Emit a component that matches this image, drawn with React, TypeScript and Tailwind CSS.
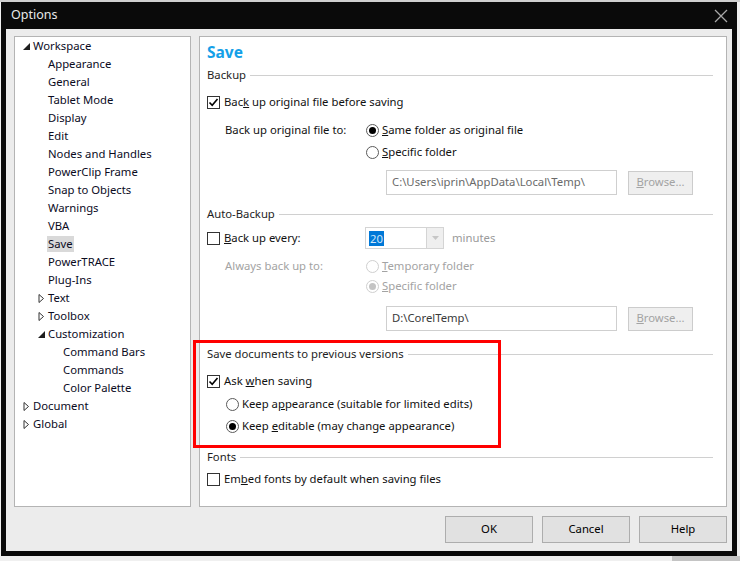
import React from "react";

const font = { fontFamily: '"Segoe UI", "Noto Sans", sans-serif' };

function Check({ checked, disabled }: { checked?: boolean; disabled?: boolean }) {
  return (
    <span
      className={`inline-flex w-[13px] h-[13px] shrink-0 items-center justify-center border bg-white ${
        disabled ? "border-[#c8c8c8]" : "border-[#333333]"
      }`}
    >
      {checked && (
        <svg width="11" height="11" viewBox="0 0 11 11">
          <path d="M1.5 5.5 L4.2 8.3 L9.5 2" fill="none" stroke="#000" strokeWidth="1.6" />
        </svg>
      )}
    </span>
  );
}

function Radio({ checked, disabled }: { checked?: boolean; disabled?: boolean }) {
  return (
    <span
      className={`inline-flex w-[13px] h-[13px] shrink-0 items-center justify-center rounded-full border bg-white ${
        disabled ? "border-[#cfcfcf]" : "border-[#5a5a5a]"
      }`}
    >
      {checked && (
        <span className={`w-[7px] h-[7px] rounded-full ${disabled ? "bg-[#c4c4c4]" : "bg-black"}`} />
      )}
    </span>
  );
}

function Heading({ text }: { text: string }) {
  return (
    <div className="flex items-center h-[20px] gap-[4px] text-[#1e1e1e]">
      <span className="whitespace-nowrap">{text}</span>
      <div className="flex-1 h-px bg-[#d0d0d0]" />
    </div>
  );
}

function Browse() {
  return (
    <div className="w-[65px] h-[24px] border border-[#cccccc] bg-[#efefef] text-[#a3a3a3] flex items-center justify-center">
      <span>
        <u>B</u>rowse...
      </span>
    </div>
  );
}

function TriClosed() {
  return (
    <svg width="7" height="9" viewBox="0 0 7 9" className="shrink-0">
      <path d="M1 0.5 L5.5 4.5 L1 8.5 Z" fill="#fff" stroke="#333" strokeWidth="1" />
    </svg>
  );
}
function TriOpen() {
  return (
    <svg width="7" height="7" viewBox="0 0 7 7" className="shrink-0">
      <path d="M7 0 L7 7 L0 7 Z" fill="#1e1e1e" />
    </svg>
  );
}

type Item = { label: string; level: number; tri?: "open" | "closed"; selected?: boolean };
const items: Item[] = [
  { label: "Workspace", level: 0, tri: "open" },
  { label: "Appearance", level: 1 },
  { label: "General", level: 1 },
  { label: "Tablet Mode", level: 1 },
  { label: "Display", level: 1 },
  { label: "Edit", level: 1 },
  { label: "Nodes and Handles", level: 1 },
  { label: "PowerClip Frame", level: 1 },
  { label: "Snap to Objects", level: 1 },
  { label: "Warnings", level: 1 },
  { label: "VBA", level: 1 },
  { label: "Save", level: 1, selected: true },
  { label: "PowerTRACE", level: 1 },
  { label: "Plug-Ins", level: 1 },
  { label: "Text", level: 1, tri: "closed" },
  { label: "Toolbox", level: 1, tri: "closed" },
  { label: "Customization", level: 1, tri: "open" },
  { label: "Command Bars", level: 2 },
  { label: "Commands", level: 2 },
  { label: "Color Palette", level: 2 },
  { label: "Document", level: 0, tri: "closed" },
  { label: "Global", level: 0, tri: "closed" },
];

export default function App() {
  return (
    <div className="relative w-[740px] h-[561px] bg-[#f0f0f0] overflow-hidden text-[11.3px]" style={font}>
      <div className="absolute left-0 top-0 w-[740px] h-[2px] bg-[#cfcfcf]" />
      <div className="absolute left-[672px] top-[556px] w-[68px] h-[5px] bg-[#c4c4c4]" />
      {/* window */}
      <div className="absolute left-[1px] top-[2px] w-[736px] h-[554px] bg-[#0a0a0a] flex flex-col px-[5px] pb-[5px]">
        <div className="h-[27px] flex items-center justify-between pl-[5px] pr-[4px] text-[#e8e8e8] text-[12.5px]">
          <span>Options</span>
          <svg width="14" height="14" viewBox="0 0 14 14">
            <path d="M1 1 L13 13 M13 1 L1 13" stroke="#a8a8a8" strokeWidth="1.3" />
          </svg>
        </div>
        <div className="flex-1 bg-[#ececec] flex flex-col pl-[8px] pr-[5px] pt-[7px]">
          <div className="flex gap-[8px] h-[471px]">
            {/* tree */}
            <div className="w-[177px] h-full bg-white border border-[#b4b4b4] text-[#0b0b1e]">
              {items.map((it) => (
                <div
                  key={it.label}
                  className="h-[18px] flex items-center"
                  style={{ paddingLeft: it.level === 0 ? 8 : it.level === 1 ? (it.tri ? 23 : 33) : 48 }}
                >
                  {it.tri && (
                    <span className="w-[10px] flex items-center">
                      {it.tri === "open" ? <TriOpen /> : <TriClosed />}
                    </span>
                  )}
                  <span className={`leading-[16px] ${it.selected ? "bg-[#d9d9d9] px-[1px] -ml-[1px]" : ""}`}>
                    {it.label}
                  </span>
                </div>
              ))}
            </div>
            {/* right panel */}
            <div className="relative flex-1 h-full bg-white border border-[#b4b4b4] pl-[7px] pr-[13px] pt-[6px] text-[#111]">
              <div className="h-[20px] flex items-center text-[15.5px] font-bold text-[#14a0e8]">Save</div>
              <div className="mt-[2px]">
                <Heading text="Backup" />
              </div>
              <div className="mt-[7px] h-[20px] flex items-center gap-[4px]">
                <Check checked />
                <span>
                  Bac<u>k</u> up original file before saving
                </span>
              </div>
              <div className="mt-[8px] ml-[18px] flex">
                <div className="w-[141px] h-[20px] flex items-center">Back up original file to:</div>
                <div className="flex flex-col">
                  <div className="h-[20px] flex items-center gap-[3px]">
                    <Radio checked />
                    <span>
                      <u>S</u>ame folder as original file
                    </span>
                  </div>
                  <div className="h-[20px] mt-[2px] flex items-center gap-[3px]">
                    <Radio />
                    <span>
                      <u>S</u>pecific folder
                    </span>
                  </div>
                </div>
              </div>
              <div className="mt-[8px] ml-[179px] flex items-center gap-[11px]">
                <div className="w-[231px] h-[25px] border border-[#cfcfcf] flex items-center pl-[5px] text-[#6a6a6a]">
                  C:\Users\iprin\AppData\Local\Temp\
                </div>
                <Browse />
              </div>
              <div className="mt-[9px]">
                <Heading text="Auto-Backup" />
              </div>
              <div className="mt-[3px] flex items-center h-[22px]">
                <div className="w-[158px] flex items-center gap-[4px]">
                  <Check />
                  <span>
                    <u>B</u>ack up every:
                  </span>
                </div>
                <div className="w-[79px] h-[22px] border border-[#d4d4d4] flex">
                  <div className="flex-1 flex items-center pl-[3px]">
                    <span className="bg-[#0078d7] text-[#cfe6fa] leading-[15px] px-[1px]">20</span>
                  </div>
                  <div className="w-[17px] h-full bg-[#efefef] border-l border-[#d4d4d4] flex items-center justify-center">
                    <svg width="7" height="4" viewBox="0 0 7 4">
                      <path d="M0 0 L7 0 L3.5 4 Z" fill="#c6c6c6" />
                    </svg>
                  </div>
                </div>
                <span className="ml-[8px] text-[#9a9a9a]">minutes</span>
              </div>
              <div className="mt-[7px] ml-[18px] flex text-[#a3a3a3]">
                <div className="w-[141px] h-[20px] flex items-center">Always back up to:</div>
                <div className="flex flex-col">
                  <div className="h-[20px] flex items-center gap-[3px]">
                    <Radio disabled />
                    <span>
                      <u>T</u>emporary folder
                    </span>
                  </div>
                  <div className="h-[20px] flex items-center gap-[3px]">
                    <Radio disabled checked />
                    <span>
                      <u>S</u>pecific folder
                    </span>
                  </div>
                </div>
              </div>
              <div className="mt-[10px] ml-[179px] flex items-center gap-[11px]">
                <div className="w-[231px] h-[25px] border border-[#cfcfcf] flex items-center pl-[5px] text-[#3a3a3a]">
                  D:\CorelTemp\
                </div>
                <Browse />
              </div>
              <div className="mt-[13px]">
                <Heading text="Save documents to previous versions" />
              </div>
              <div className="mt-[7px] h-[20px] flex items-center gap-[4px]">
                <Check checked />
                <span>
                  Ask <u>w</u>hen saving
                </span>
              </div>
              <div className="mt-[3px] ml-[19px] h-[20px] flex items-center gap-[3px]">
                <Radio />
                <span>
                  Keep a<u>p</u>pearance (suitable for limited edits)
                </span>
              </div>
              <div className="mt-[2px] ml-[19px] h-[20px] flex items-center gap-[3px]">
                <Radio checked />
                <span>
                  Keep <u>e</u>ditable (may change appearance)
                </span>
              </div>
              <div className="mt-[11px]">
                <Heading text="Fonts" />
              </div>
              <div className="mt-[2px] h-[20px] flex items-center gap-[4px]">
                <Check />
                <span>
                  Em<u>b</u>ed fonts by default when saving files
                </span>
              </div>
              {/* red annotation */}
              <div className="absolute left-[-7px] top-[303px] w-[308px] h-[108px] border-[3px] border-[#ff0000] pointer-events-none" />
            </div>
          </div>
          <div className="mt-[9px] flex justify-end gap-[9px]">
            {["OK", "Cancel", "Help"].map((b) => (
              <div
                key={b}
                className="w-[88px] h-[27px] bg-[#e1e1e1] border border-[#adadad] flex items-center justify-center text-black"
              >
                {b}
              </div>
            ))}
          </div>
        </div>
      </div>
    </div>
  );
}
